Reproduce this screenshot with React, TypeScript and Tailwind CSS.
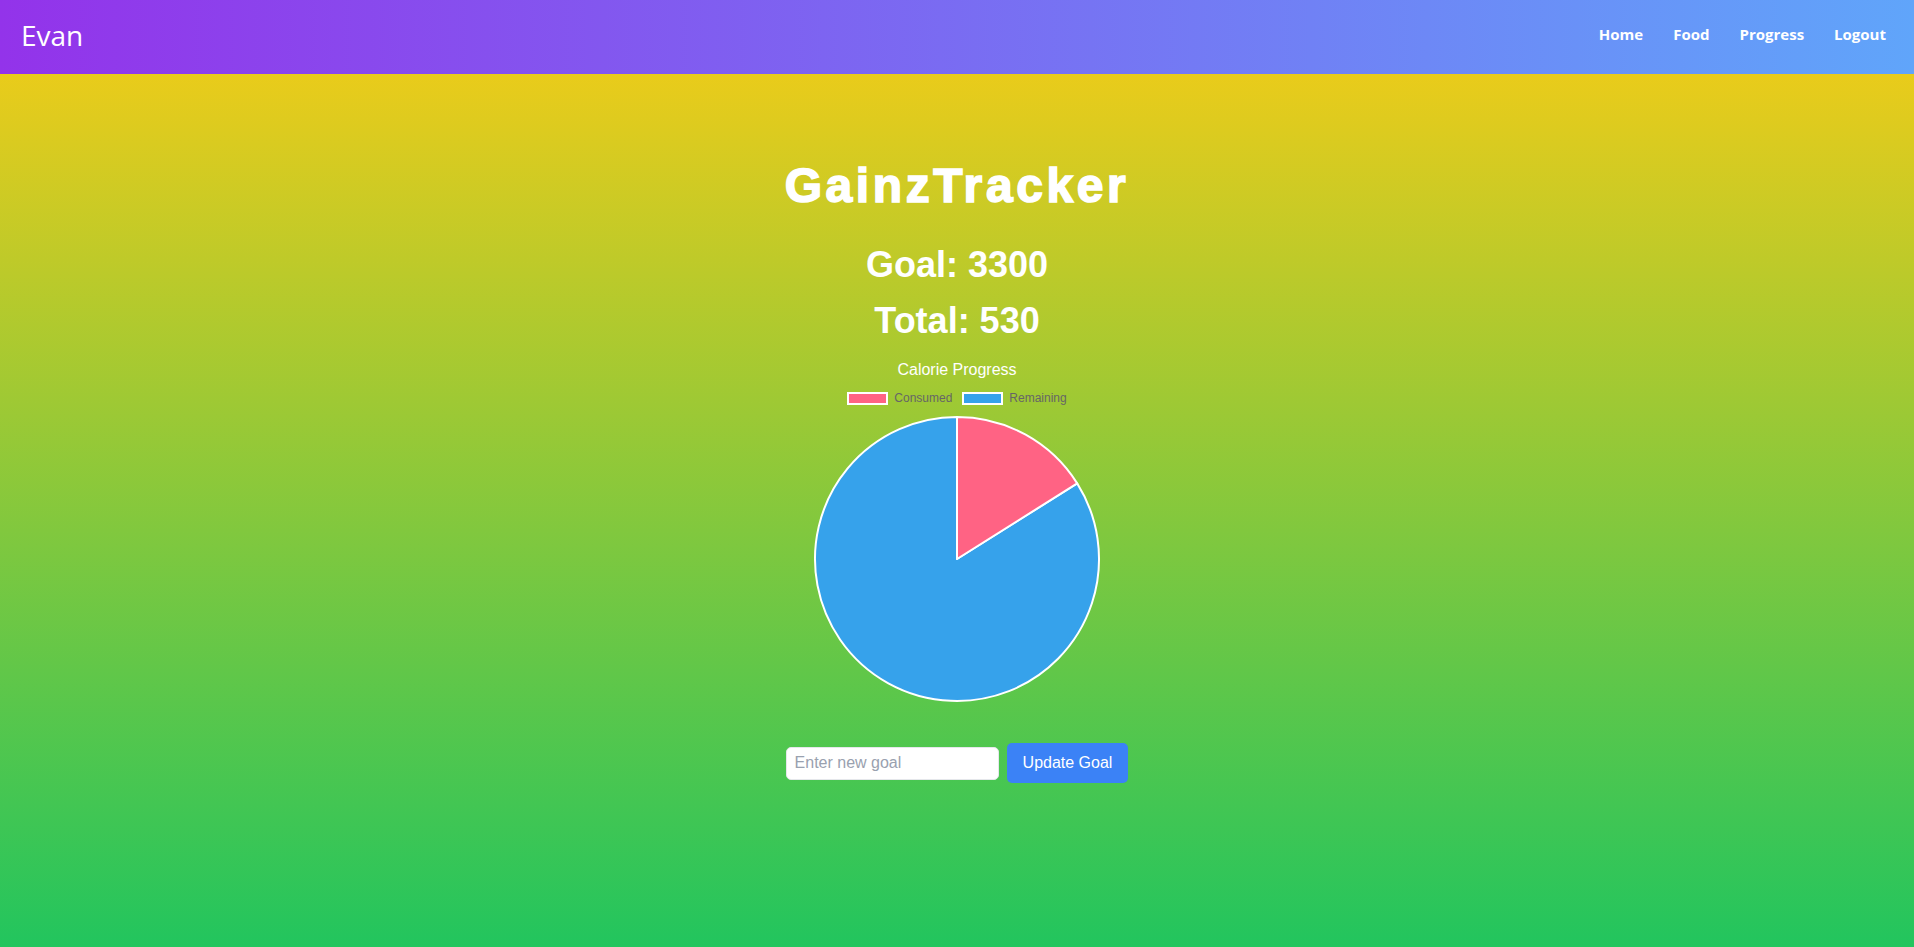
import React from "react";

function Pie() {
  const consumed = 530;
  const goal = 3300;
  const cx = 145;
  const cy = 145;
  const r = 142;
  const theta = (2 * Math.PI * consumed) / goal;
  const ex = cx + r * Math.sin(theta);
  const ey = cy - r * Math.cos(theta);
  const large = theta > Math.PI ? 1 : 0;
  const pink = `M ${cx} ${cy} L ${cx} ${cy - r} A ${r} ${r} 0 ${large} 1 ${ex} ${ey} Z`;
  const blue = `M ${cx} ${cy} L ${ex} ${ey} A ${r} ${r} 0 ${1 - large} 1 ${cx} ${cy - r} Z`;
  return (
    <svg width="290" height="290" viewBox="0 0 290 290">
      <path d={blue} fill="#36a2eb" stroke="#ffffff" strokeWidth="2" strokeLinejoin="round" />
      <path d={pink} fill="#ff6384" stroke="#ffffff" strokeWidth="2" strokeLinejoin="round" />
    </svg>
  );
}

export default function App() {
  return (
    <div className="min-h-screen bg-[linear-gradient(to_bottom,#facc15,#22c55e)] font-['Liberation_Sans',Arial,sans-serif]">
      <nav className="h-[74px] flex items-center justify-between pl-[21px] pr-[28px] pb-[5px] bg-[linear-gradient(to_right,#9333ea,#60a5fa)] font-['Open_Sans','Noto_Sans',sans-serif] text-white">
        <div className="text-[28px] leading-none">Evan</div>
        <div className="flex items-center gap-[30px] text-[15px] font-bold">
          <a href="#">Home</a>
          <a href="#">Food</a>
          <a href="#">Progress</a>
          <a href="#">Logout</a>
        </div>
      </nav>
      <main className="flex flex-col items-center pt-[88px] text-white">
        <h1 className="text-[48px] leading-[48px] font-bold tracking-[3.6px] [-webkit-text-stroke:1.6px_white]">
          GainzTracker
        </h1>
        <h2 className="mt-[35px] text-[36px] leading-[40px] font-bold">Goal: 3300</h2>
        <h2 className="mt-[16px] text-[36px] leading-[40px] font-bold">Total: 530</h2>
        <div className="mt-[19px] flex flex-col items-center">
          <div className="text-[16px] leading-[20px]">Calorie Progress</div>
          <div className="mt-[11px] flex items-center text-[12px] leading-[14px] text-[#666666]">
            <span className="w-[41px] h-[13px] bg-[#ff6384] border-2 border-white" />
            <span className="ml-[6px]">Consumed</span>
            <span className="ml-[10px] w-[41px] h-[13px] bg-[#36a2eb] border-2 border-white" />
            <span className="ml-[6px]">Remaining</span>
          </div>
          <div className="mt-[9px]">
            <Pie />
          </div>
        </div>
        <div className="mt-[39px] flex items-center gap-2">
          <input
            type="text"
            placeholder="Enter new goal"
            className="w-[213px] h-[33px] px-2 rounded-[5px] bg-white border border-gray-200 text-[16px] text-black placeholder:text-gray-400 outline-none"
          />
          <button className="h-[40px] px-4 rounded-[5px] bg-[#3b82f6] text-white text-[16px]">
            Update Goal
          </button>
        </div>
      </main>
    </div>
  );
}
